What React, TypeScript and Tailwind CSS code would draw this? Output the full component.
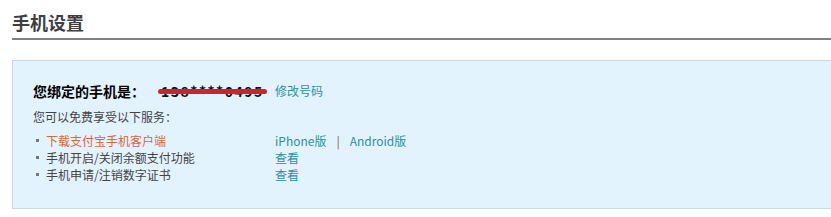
const font = {
  fontFamily: '"Noto Sans CJK SC", "Liberation Sans", sans-serif',
};

interface ServiceItem {
  label: string;
  highlight?: boolean;
  links: string[];
}

const services: ServiceItem[] = [
  { label: "下载支付宝手机客户端", highlight: true, links: ["iPhone版", "Android版"] },
  { label: "手机开启/关闭余额支付功能", links: ["查看"] },
  { label: "手机申请/注销数字证书", links: ["查看"] },
];

const App = () => {
  return (
    <div className="w-[831px] h-[217px] bg-white pl-3 overflow-hidden" style={font}>
      <h2 className="pt-[10px] pb-[4px] text-[18px] leading-[24px] font-bold text-[#3f3f3f] border-b-2 border-[#808080]">
        手机设置
      </h2>

      <div className="mt-5 h-[149px] bg-[#e2f3fd] border border-r-0 border-[#c9d9e2] pl-5 pt-5">
        {/* bound phone, number scribbled out */}
        <div className="grid grid-cols-[242px_1fr] items-center h-5">
          <div className="flex items-center">
            <span className="text-[14px] leading-5 font-bold text-black">您绑定的手机是：</span>
            <span className="relative ml-[16px] text-[14px] leading-5 font-bold text-[#111] tracking-[1.5px]">
              138****0495
              <span className="absolute left-[-3px] right-[-3px] top-[8px] h-[5px] rounded-full bg-[#cf232b]" />
            </span>
          </div>
          <a className="text-[12px] leading-5 text-[#2f8f9f]">修改号码</a>
        </div>

        <div className="mt-[7px] text-[12px] leading-[18px] text-[#444]">您可以免费享受以下服务：</div>

        <ul className="mt-[6px]">
          {services.map((s) => (
            <li key={s.label} className="grid grid-cols-[242px_1fr] text-[12px] leading-[17px]">
              <div className="flex items-center">
                <span className="ml-[3px] mr-[7px] w-[3px] h-[3px] bg-[#777]" />
                <span className={s.highlight ? "text-[#d2693c]" : "text-[#444]"}>{s.label}</span>
              </div>
              <div className="flex items-center text-[#2f8f9f]">
                {s.links.map((l, i) => (
                  <span key={l} className="flex items-center">
                    {i > 0 && <span className="mx-[10px] text-[#666]">|</span>}
                    <a>{l}</a>
                  </span>
                ))}
              </div>
            </li>
          ))}
        </ul>
      </div>
    </div>
  );
};

export default App;
